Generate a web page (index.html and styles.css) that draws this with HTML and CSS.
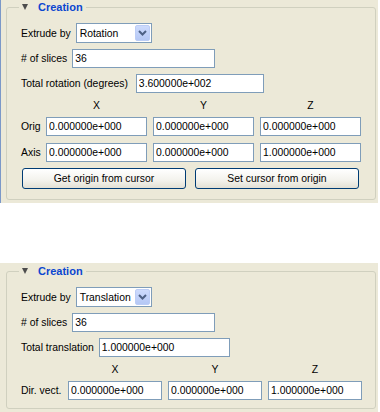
FILE: index.html
```html
<!DOCTYPE html>
<html lang="en">
<head>
  <meta charset="UTF-8">
  <title>Extrude Creation</title>
  <link rel="stylesheet" href="styles.css">
</head>
<body>

  <div class="panel panel-rotation">
      <fieldset class="group">
          <legend class="group-title"><span class="arrow"></span>Creation</legend>

          <div class="field">
              <label>Extrude by</label>
              <div class="combo">
                  <span class="combo-text">Rotation</span>
                  <span class="combo-btn">
                      <svg width="9" height="6" viewBox="0 0 9 6"><path d="M1 1l3.5 3.5L8 1" fill="none" stroke="#4d6185" stroke-width="2"/></svg>
                  </span>
              </div>
          </div>

          <div class="field">
              <label for="slices-1"># of slices</label>
              <input type="text" id="slices-1" class="txt slices" value="36">
          </div>

          <div class="field">
              <label for="rotation">Total rotation (degrees)</label>
              <input type="text" id="rotation" class="txt rotation" value="3.600000e+002">
          </div>

          <div class="vec vec-rot">
              <span></span>
              <span class="axis-head">X</span>
              <span class="axis-head">Y</span>
              <span class="axis-head">Z</span>

              <label>Orig</label>
              <input type="text" class="txt" value="0.000000e+000">
              <input type="text" class="txt" value="0.000000e+000">
              <input type="text" class="txt" value="0.000000e+000">

              <label>Axis</label>
              <input type="text" class="txt" value="0.000000e+000">
              <input type="text" class="txt" value="0.000000e+000">
              <input type="text" class="txt" value="1.000000e+000">
          </div>

          <div class="btn-row">
              <button>Get origin from cursor</button>
              <button>Set cursor from origin</button>
          </div>
      </fieldset>
  </div>

  <div class="panel panel-translation">
      <fieldset class="group">
          <legend class="group-title"><span class="arrow"></span>Creation</legend>

          <div class="field">
              <label>Extrude by</label>
              <div class="combo">
                  <span class="combo-text">Translation</span>
                  <span class="combo-btn">
                      <svg width="9" height="6" viewBox="0 0 9 6"><path d="M1 1l3.5 3.5L8 1" fill="none" stroke="#4d6185" stroke-width="2"/></svg>
                  </span>
              </div>
          </div>

          <div class="field">
              <label for="slices-2"># of slices</label>
              <input type="text" id="slices-2" class="txt slices" value="36">
          </div>

          <div class="field">
              <label for="translation">Total translation</label>
              <input type="text" id="translation" class="txt translation" value="1.000000e+000">
          </div>

          <div class="vec vec-trans">
              <span></span>
              <span class="axis-head">X</span>
              <span class="axis-head">Y</span>
              <span class="axis-head">Z</span>

              <label>Dir. vect.</label>
              <input type="text" class="txt" value="0.000000e+000">
              <input type="text" class="txt" value="0.000000e+000">
              <input type="text" class="txt" value="1.000000e+000">
          </div>
      </fieldset>
  </div>

</body>
</html>
```

FILE: styles.css
```css
* {
  margin: 0;
  padding: 0;
  box-sizing: border-box;
}

body {
  font-family: "Liberation Sans", Arial, sans-serif;
  font-size: 10.4px;
  color: #000;
  background-color: #fff;
  width: 380px;
}

.panel {
  width: 378px;
  background-color: #ece9d8;
  padding: 0 2px 3px 6px;
}

.panel-rotation {
  border-left: 1px solid #7b98c8;
  padding-left: 5px;
}

.panel-translation {
  margin-top: 60px;
  padding-top: 1px;
  padding-bottom: 4px;
}

.group {
  min-width: 0;
  border: 1px solid #d0d0bf;
  border-radius: 3px;
  padding: 9px 0 10px 14px;
}

.panel-translation .group {
  padding-bottom: 8px;
}

.group-title {
  display: flex;
  align-items: center;
  height: 14px;
  margin-left: -2px;
  padding: 0 3px;
  font-size: 11px;
  font-weight: bold;
  color: #0b46d0;
}

.arrow {
  width: 0;
  height: 0;
  border-left: 3.5px solid transparent;
  border-right: 3.5px solid transparent;
  border-top: 6px solid #4d4d4d;
  margin-right: 10px;
}

.field {
  display: flex;
  align-items: center;
  gap: 5px;
  margin-bottom: 6px;
}

.txt {
  height: 19px;
  border: 1px solid #7f9db9;
  padding: 0 2px;
  font-family: inherit;
  font-size: 10.4px;
  color: #000;
  background-color: #fff;
  outline: none;
}

.slices {
  width: 143px;
}

.rotation {
  width: 128px;
  margin-left: 3px;
}

.translation {
  width: 131px;
}

.combo {
  display: flex;
  align-items: center;
  justify-content: space-between;
  width: 76px;
  height: 20px;
  border: 1px solid #7f9db9;
  background-color: #fff;
  padding: 1px 1px 1px 3px;
}

.combo-btn {
  display: flex;
  align-items: center;
  justify-content: center;
  width: 15px;
  height: 100%;
  border: 1px solid #bccdf6;
  border-radius: 2px;
  background: linear-gradient(#cddbfd, #b5c8f5);
}

.vec {
  display: grid;
  align-items: center;
  column-gap: 6px;
  row-gap: 7px;
}

.vec-rot {
  grid-template-columns: 19px 101px 101px 101px;
  margin-bottom: 6px;
}

.vec-trans {
  grid-template-columns: 41px 94px 94px 94px;
}

.axis-head {
  text-align: center;
  line-height: 14px;
  margin-bottom: -3px;
}

.vec .txt {
  width: 100%;
}

.btn-row {
  display: flex;
  gap: 9px;
  padding-left: 1px;
}

.btn-row button {
  width: 164px;
  height: 21px;
  border: 1px solid #003c74;
  border-radius: 3px;
  background: linear-gradient(#ffffff, #f3f2ec 60%, #e3e0d4);
  font-family: inherit;
  font-size: 10.4px;
  color: #000;
}
```
